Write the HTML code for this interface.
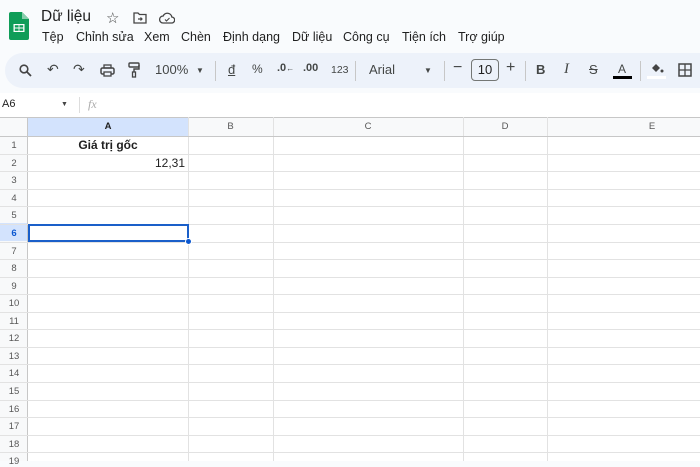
<!DOCTYPE html>
<html><head><meta charset="utf-8"><style>
*{margin:0;padding:0;box-sizing:border-box}
body{width:700px;height:461px;overflow:hidden;background:#f9fbfd;font-family:"Liberation Sans",Arial,sans-serif;color:#1f1f1f;position:relative}
.a{position:absolute;white-space:nowrap}
.m{position:absolute;top:30px;font-size:12.5px;white-space:nowrap}
.tb{position:absolute;left:5px;top:53px;width:720px;height:35px;border-radius:18px;background:#edf2fa}
.ic{position:absolute;font-size:13px;color:#444746;top:62px}
.sep{position:absolute;top:61px;width:1px;height:20px;background:#c7c7c7}
.grid{position:absolute;left:0;top:117px;width:700px;height:344px;background:#fff}
.hl{position:absolute;left:0;width:700px;height:1px;background:#e2e2e2}
.vl{position:absolute;top:0;width:1px;height:344px;background:#e2e2e2}
.rh{position:absolute;left:0;width:28px;text-align:center;font-size:9.5px;color:#575757}
.ch{position:absolute;top:0;height:19px;line-height:19px;text-align:center;font-size:9.5px;color:#575757}
</style></head><body>
<svg class="a" style="left:9px;top:12px" width="20" height="28" viewBox="0 0 20 28"><path d="M2 0h11l7 7v19a2 2 0 0 1-2 2H2a2 2 0 0 1-2-2V2a2 2 0 0 1 2-2z" fill="#0f9d58"/><path d="M13 0v7h7z" fill="#87ceac"/><rect x="4.5" y="12" width="11" height="8" fill="#fff"/><rect x="5.8" y="13.2" width="3.8" height="2.3" fill="#0f9d58"/><rect x="10.4" y="13.2" width="3.8" height="2.3" fill="#0f9d58"/><rect x="5.8" y="16.5" width="3.8" height="2.3" fill="#0f9d58"/><rect x="10.4" y="16.5" width="3.8" height="2.3" fill="#0f9d58"/></svg>
<div class="a" style="left:41px;top:8px;font-size:15.5px">Dữ liệu</div>
<div class="a" style="left:106px;top:9px;font-size:15px;color:#444">☆</div>
<svg class="a" style="left:133px;top:12px" width="14" height="12" viewBox="0 0 14 12"><path d="M1 1h4l1.5 1.5H13v8.5H1z" fill="none" stroke="#444" stroke-width="1.3"/><path d="M5 7h4M7.5 5.5L9 7 7.5 8.5" stroke="#444" stroke-width="1.2" fill="none"/></svg>
<svg class="a" style="left:159px;top:12px" width="16" height="12" viewBox="0 0 16 12"><path d="M4 11h8.5a3 3 0 0 0 .3-6A4.5 4.5 0 0 0 4.2 4 3.5 3.5 0 0 0 4 11z" fill="none" stroke="#444" stroke-width="1.3"/><path d="M6 7.5l1.5 1.5 3-3" fill="none" stroke="#444" stroke-width="1.1"/></svg>
<div class="m" style="left:42px">Tệp</div><div class="m" style="left:76px">Chỉnh sửa</div><div class="m" style="left:144px">Xem</div><div class="m" style="left:181px">Chèn</div><div class="m" style="left:223px">Định dạng</div><div class="m" style="left:292px">Dữ liệu</div><div class="m" style="left:343px">Công cụ</div><div class="m" style="left:402px">Tiện ích</div><div class="m" style="left:458px">Trợ giúp</div>
<div class="tb"></div>
<svg class="a" style="left:19px;top:64px" width="13" height="13" viewBox="0 0 13 13"><circle cx="5" cy="5" r="3.8" fill="none" stroke="#444" stroke-width="1.6"/><path d="M8 8l4 4" stroke="#444" stroke-width="1.8"/></svg>
<div class="ic" style="left:47px;font-size:14px;top:61px">↶</div>
<div class="ic" style="left:73px;font-size:14px;top:61px">↷</div>
<svg class="a" style="left:100px;top:64px" width="15" height="13" viewBox="0 0 15 13"><rect x="1" y="4" width="13" height="6" rx="1.5" fill="none" stroke="#444" stroke-width="1.5"/><rect x="4" y="1" width="7" height="3" fill="none" stroke="#444" stroke-width="1.3"/><rect x="4" y="8" width="7" height="4" fill="#edf2fa" stroke="#444" stroke-width="1.3"/></svg>
<svg class="a" style="left:128px;top:62px" width="12" height="16" viewBox="0 0 12 16"><rect x="1" y="1" width="10" height="4" rx="1" fill="none" stroke="#444" stroke-width="1.4"/><path d="M11 3h0v4H6v3" fill="none" stroke="#444" stroke-width="1.4"/><rect x="4.5" y="10" width="3" height="5" fill="none" stroke="#444" stroke-width="1.3"/></svg>
<div class="ic" style="left:155px;font-size:13px">100%</div>
<div class="ic" style="left:196px;font-size:8px;top:66px">▼</div>
<div class="sep" style="left:215px"></div>
<div class="ic" style="left:228px;text-decoration:underline">đ</div>
<div class="ic" style="left:252px;font-size:12px">%</div>
<div class="ic" style="left:277px;font-size:11px;font-weight:bold">.0<span style="font-size:8px">←</span></div>
<div class="ic" style="left:303px;font-size:11px;font-weight:bold">.00</div>
<div class="ic" style="left:331px;font-size:10.5px;top:64px">123</div>
<div class="sep" style="left:355px"></div>
<div class="ic" style="left:369px;font-size:13px">Arial</div>
<div class="ic" style="left:424px;font-size:8px;top:66px">▼</div>
<div class="sep" style="left:444px"></div>
<div class="ic" style="left:453px;font-size:16px;top:59px">−</div>
<div class="a" style="left:471px;top:59px;width:28px;height:22px;border:1px solid #747775;border-radius:4px;font-size:13px;text-align:center;line-height:20px;color:#1f1f1f">10</div>
<div class="ic" style="left:506px;font-size:16px;top:59px">+</div>
<div class="sep" style="left:525px"></div>
<div class="ic" style="left:536px;font-weight:bold">B</div>
<div class="ic" style="left:564px;font-style:italic;font-family:'Liberation Serif',serif;font-size:15px;top:61px">I</div>
<div class="ic" style="left:589px;text-decoration:line-through">S</div>
<div class="ic" style="left:618px;font-size:12px">A</div>
<div class="a" style="left:613px;top:76px;width:19px;height:3px;background:#000"></div>
<div class="sep" style="left:640px"></div>
<svg class="a" style="left:649px;top:62px" width="15" height="13" viewBox="0 0 15 13"><path d="M3 6l4-4 4 4-4 4z" fill="#444"/><circle cx="13" cy="9" r="1.5" fill="#444"/></svg>
<div class="a" style="left:647px;top:76px;width:19px;height:3px;background:#fff"></div>
<svg class="a" style="left:678px;top:63px" width="14" height="14" viewBox="0 0 14 14"><rect x="1" y="1" width="12" height="12" fill="none" stroke="#444" stroke-width="1.5"/><path d="M7 1v12M1 7h12" stroke="#444" stroke-width="1.3"/></svg>
<div class="a" style="left:0;top:93px;width:700px;height:24px;background:#fff"></div>
<div class="a" style="left:2px;top:98px;font-size:11px">A6</div>
<div class="a" style="left:61px;top:101px;font-size:7px;color:#444">▼</div>
<div class="a" style="left:79px;top:97px;width:1px;height:16px;background:#ddd"></div>
<div class="a" style="left:88px;top:97px;font-size:12px;font-style:italic;color:#aaa;font-family:'Liberation Serif',serif">fx</div>
<div class="grid">
<div class="a" style="left:0;top:0;width:700px;height:19px;background:#f8f9fa"></div>
<div class="a" style="left:0;top:0;width:28px;height:344px;background:#f8f9fa"></div>
<div class="a" style="left:28px;top:0;width:160px;height:19px;background:#d3e3fd"></div>
<div class="a" style="left:0;top:106px;width:28px;height:18px;background:#d3e3fd"></div>
<div class="a" style="left:0;top:0;width:700px;height:1px;background:#c7c7c7"></div>
<div class="a" style="left:27px;top:0;width:1px;height:344px;background:#c7c7c7"></div>
<div class="vl" style="left:188px"></div><div class="vl" style="left:273px"></div><div class="vl" style="left:463px"></div><div class="vl" style="left:547px"></div>
<div class="hl" style="top:19px;background:#c7c7c7"></div>
<div class="ch" style="left:28px;width:160px;font-weight:bold;color:#1f1f1f">A</div>
<div class="ch" style="left:188px;width:85px">B</div>
<div class="ch" style="left:273px;width:190px">C</div>
<div class="ch" style="left:463px;width:84px">D</div>
<div class="ch" style="left:547px;width:210px">E</div>
<div class="hl" style="top:37px"></div><div class="hl" style="top:54px"></div><div class="hl" style="top:72px"></div><div class="hl" style="top:89px"></div><div class="hl" style="top:107px"></div><div class="hl" style="top:125px"></div><div class="hl" style="top:142px"></div><div class="hl" style="top:160px"></div><div class="hl" style="top:177px"></div><div class="hl" style="top:195px"></div><div class="hl" style="top:212px"></div><div class="hl" style="top:230px"></div><div class="hl" style="top:247px"></div><div class="hl" style="top:265px"></div><div class="hl" style="top:283px"></div><div class="hl" style="top:300px"></div><div class="hl" style="top:318px"></div><div class="hl" style="top:335px"></div>
<div class="rh" style="top:23px">1</div><div class="rh" style="top:41px">2</div><div class="rh" style="top:58px">3</div><div class="rh" style="top:76px">4</div><div class="rh" style="top:93px">5</div><div class="rh" style="top:111px;font-weight:bold;color:#0b57d0">6</div><div class="rh" style="top:129px">7</div><div class="rh" style="top:146px">8</div><div class="rh" style="top:164px">9</div><div class="rh" style="top:181px">10</div><div class="rh" style="top:199px">11</div><div class="rh" style="top:216px">12</div><div class="rh" style="top:234px">13</div><div class="rh" style="top:251px">14</div><div class="rh" style="top:269px">15</div><div class="rh" style="top:287px">16</div><div class="rh" style="top:304px">17</div><div class="rh" style="top:322px">18</div><div class="rh" style="top:339px">19</div>
<div class="a" style="left:28px;top:21px;width:160px;text-align:center;font-size:12px;font-weight:bold">Giá trị gốc</div>
<div class="a" style="left:28px;top:39px;width:157px;text-align:right;font-size:12px">12,31</div>
<div class="a" style="left:28px;top:107px;width:161px;height:18px;border:2px solid #1a5fc9"></div>
<div class="a" style="left:185px;top:121px;width:7px;height:7px;border-radius:50%;background:#0b57d0;border:1px solid #fff"></div>
</div>
</body></html>
